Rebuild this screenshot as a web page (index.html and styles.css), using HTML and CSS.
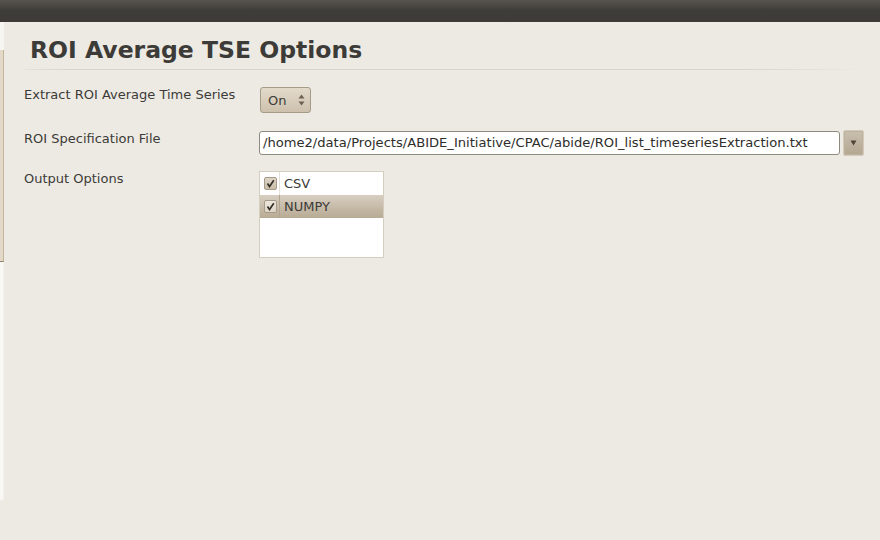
FILE: index.html
```html
<!DOCTYPE html>
<html>
<head>
<meta charset="utf-8">
<link rel="stylesheet" href="styles.css">
</head>
<body>
<div class="topbar"></div>
<div class="workspace">
  <div class="side">
    <div class="side-top"></div>
    <div class="side-sel"></div>
    <div class="side-bottom"></div>
  </div>
  <div class="main">
    <h1 class="title">ROI Average TSE Options</h1>
    <div class="sep"></div>
    <div class="form">
      <div class="label l1">Extract ROI Average Time Series</div>
      <div class="ctrl c1">
        <div class="spin">
          <span class="spin-text">On</span>
          <svg class="spin-arrows" width="7" height="12" viewBox="0 0 7 12">
            <path d="M3.5 0.5 L6.5 4.5 L0.5 4.5 Z" fill="#6d6252"/>
            <path d="M3.5 11.5 L6.5 7.5 L0.5 7.5 Z" fill="#6d6252"/>
          </svg>
        </div>
      </div>
      <div class="label l2">ROI Specification File</div>
      <div class="ctrl c2">
        <div class="entry">/home2/data/Projects/ABIDE_Initiative/CPAC/abide/ROI_list_timeseriesExtraction.txt</div>
        <div class="dropbtn">
          <svg width="7" height="6" viewBox="0 0 7 6"><path d="M0.5 0.5 L6.5 0.5 L3.5 5.5 Z" fill="#4f4638"/></svg>
        </div>
      </div>
      <div class="label l3">Output Options</div>
      <div class="ctrl c3">
        <div class="listbox">
          <div class="row">
            <div class="cell-check"><span class="check"><svg width="11" height="11" viewBox="0 0 11 11"><path d="M2.5 5.5 L4.5 8.5 L8.8 2.2" fill="none" stroke="#2f2a22" stroke-width="1.6"/></svg></span></div>
            <div class="cell-text">CSV</div>
          </div>
          <div class="row selected">
            <div class="cell-check"><span class="check"><svg width="11" height="11" viewBox="0 0 11 11"><path d="M2.5 5.5 L4.5 8.5 L8.8 2.2" fill="none" stroke="#2f2a22" stroke-width="1.6"/></svg></span></div>
            <div class="cell-text">NUMPY</div>
          </div>
        </div>
      </div>
    </div>
  </div>
</div>
</body>
</html>
```

FILE: styles.css
```css
html, body {
  margin: 0;
  padding: 0;
}
body {
  width: 880px;
  height: 540px;
  overflow: hidden;
  background: #edeae4;
  font-family: "DejaVu Sans", "Liberation Sans", sans-serif;
  color: #3c3b37;
}
.topbar {
  height: 22px;
  background: linear-gradient(to bottom, #57544e 0px, #4a4843 6px, #3e3d39 10px, #3c3b37 22px);
}
.workspace {
  display: flex;
}
.side {
  width: 4px;
  display: flex;
  flex-direction: column;
}
.side-top {
  height: 28px;
  background: #f7f5f1;
}
.side-sel {
  height: 211px;
  background: #e3d9c8;
  border-right: 1px solid #c4b59b;
  border-bottom: 1px solid #8f8068;
  width: 3px;
}
.side-bottom {
  height: 238px;
  background: #faf8f5;
  border-right: 1px solid #f4f1ec;
  width: 3px;
  border-bottom-right-radius: 2px;
}
.main {
  flex: 1;
  padding-left: 20px;
}
.title {
  margin: 14px 0 0 6px;
  font-size: 23.5px;
  line-height: 28px;
  font-weight: bold;
  color: #3c3b37;
}
.sep {
  margin-top: 5px;
  height: 1px;
  width: 840px;
  margin-left: 1px;
  background: linear-gradient(to right, rgba(215,208,196,0.3), #d9d3c8 5%, #d9d3c8 85%, rgba(215,208,196,0));
}
.form {
  display: grid;
  grid-template-columns: 235px auto;
  margin-top: 17px;
}
.label {
  font-size: 13px;
  line-height: 15px;
  color: #3c3b37;
}
.l1 { padding-top: 0; }
.l2 { padding-top: 18px; }
.l3 { padding-top: 15px; }
.c1 { padding-left: 1px; }
.c2 { padding-top: 17px; display: flex; align-items: flex-start; }
.c3 { padding-top: 15px; }
.spin {
  width: 49px;
  height: 24px;
  border: 1px solid #a69b87;
  border-radius: 3px;
  background: linear-gradient(to bottom, #e3dacb, #cdc1ad);
  display: flex;
  align-items: center;
  box-sizing: content-box;
}
.spin-text {
  font-size: 13px;
  margin-left: 7px;
  color: #3c3b37;
}
.spin-arrows {
  margin-left: 12px;
}
.entry {
  margin-top: 1px;
  width: 572px;
  height: 22px;
  padding: 0 4px 0 3px;
  border: 1px solid #8f8a7e;
  border-radius: 3px;
  background: #ffffff;
  font-size: 13.1px;
  line-height: 22px;
  color: #2e2d2a;
  white-space: nowrap;
  overflow: hidden;
}
.dropbtn {
  margin-left: 3px;
  width: 19px;
  height: 24px;
  border: 1px solid #d3cabb;
  border-radius: 2px;
  background: linear-gradient(to bottom, #c9bfae, #b3a791);
  box-shadow: inset 0 0 0 1px #bfb39f;
  display: flex;
  align-items: center;
  justify-content: center;
}
.listbox {
  width: 123px;
  height: 85px;
  border: 1px solid #d5cdc0;
  background: #ffffff;
}
.row {
  display: flex;
  height: 23px;
  align-items: center;
}
.row.selected {
  background: linear-gradient(to bottom, #d8cfc2, #c4b8a5 60%, #b8ab95);
}
.cell-check {
  width: 20px;
  height: 100%;
  border-right: 1px solid #e5e0d8;
  box-sizing: border-box;
  display: flex;
  align-items: center;
  padding-left: 4px;
}
.row.selected .cell-check {
  border-right-color: #b3a690;
}
.check {
  width: 11px;
  height: 11px;
  border: 1px solid #a59a87;
  border-radius: 2px;
  background: linear-gradient(to bottom, #ddd4c6, #c9bda9);
  display: flex;
}
.row.selected .check {
  background: linear-gradient(to bottom, #ece6dc, #ddd4c6);
}
.cell-text {
  padding-left: 4px;
  font-size: 13px;
  color: #3c3b37;
}
```
